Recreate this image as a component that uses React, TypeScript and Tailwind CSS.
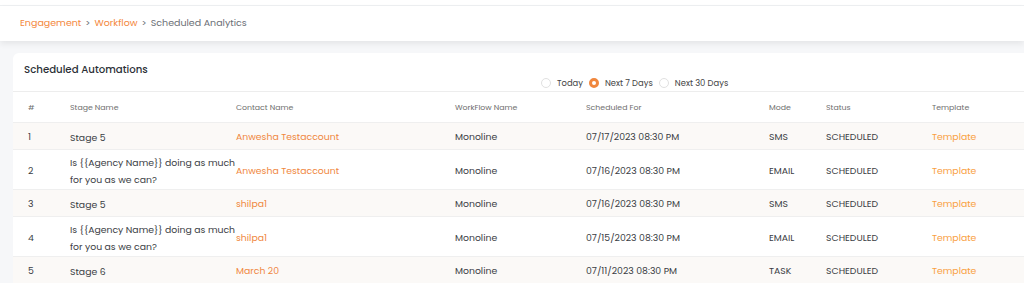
import React from 'react';

type Row = {
  id: number;
  stage: string[];
  contact: string;
  workflow: string;
  scheduledFor: string;
  mode: string;
  status: string;
};

const LONG_STAGE = ['Is {{Agency Name}} doing as much', 'for you as we can?'];

const ROWS: Row[] = [
  { id: 1, stage: ['Stage 5'], contact: 'Anwesha Testaccount', workflow: 'Monoline', scheduledFor: '07/17/2023 08:30 PM', mode: 'SMS', status: 'SCHEDULED' },
  { id: 2, stage: LONG_STAGE, contact: 'Anwesha Testaccount', workflow: 'Monoline', scheduledFor: '07/16/2023 08:30 PM', mode: 'EMAIL', status: 'SCHEDULED' },
  { id: 3, stage: ['Stage 5'], contact: 'shilpa1', workflow: 'Monoline', scheduledFor: '07/16/2023 08:30 PM', mode: 'SMS', status: 'SCHEDULED' },
  { id: 4, stage: LONG_STAGE, contact: 'shilpa1', workflow: 'Monoline', scheduledFor: '07/15/2023 08:30 PM', mode: 'EMAIL', status: 'SCHEDULED' },
  { id: 5, stage: ['Stage 6'], contact: 'March 20', workflow: 'Monoline', scheduledFor: '07/11/2023 08:30 PM', mode: 'TASK', status: 'SCHEDULED' },
];

const COLS = 'grid grid-cols-[42px_166px_219px_131px_183px_57px_106px_1fr] items-center';
const HEADERS = ['#', 'Stage Name', 'Contact Name', 'WorkFlow Name', 'Scheduled For', 'Mode', 'Status', 'Template'];

function Radio({ label, checked }: { label: string; checked?: boolean }) {
  return (
    <label className="flex items-center gap-[6px]">
      {checked ? (
        <span className="h-[10px] w-[10px] rounded-full border-[3px] border-[#f0873e]" />
      ) : (
        <span className="h-[10px] w-[10px] rounded-full border border-[#e1e1e1]" />
      )}
      <span className="text-[8.4px] text-[#444]">{label}</span>
    </label>
  );
}

export default function App() {
  return (
    <div className="h-[283px] w-[1024px] overflow-hidden bg-[#f6f7f9] font-['Poppins','Open_Sans',sans-serif]">
      <div className="h-[5px] bg-white" />
      <div className="h-px bg-[#eef0f2]" />
      <header className="flex h-[35px] items-center bg-white px-5 text-[9.5px] shadow-[0_3px_6px_rgba(0,0,0,0.07)]">
        <span className="text-[#f4873c]">Engagement</span>
        <span className="mx-1 text-[#6b6f76]">&gt;</span>
        <span className="text-[#f4873c]">Workflow</span>
        <span className="mx-1 text-[#6b6f76]">&gt;</span>
        <span className="text-[#6b6f76]">Scheduled Analytics</span>
      </header>

      <main className="pl-[13px] pt-[12px]">
        <div className="w-[1030px] rounded-t-[6px] bg-white">
          <div className="h-[39px] border-b border-[#ededed] px-[11px] pt-[10px]">
            <h2 className="text-[10.2px] font-medium leading-[14px] text-[#2b2f36]">Scheduled Automations</h2>
            <div className="ml-[517px] flex items-center gap-[6px] leading-[12px]">
              <Radio label="Today" />
              <Radio label="Next 7 Days" checked />
              <Radio label="Next 30 Days" />
            </div>
          </div>

          <div className={`${COLS} h-[31px] border-b border-[#efefef] pl-[15px] pt-[2px] text-[7.8px] text-[#6e6e6e]`}>
            {HEADERS.map((h) => (
              <div key={h}>{h}</div>
            ))}
          </div>

          {ROWS.map((r, i) => {
            const tall = r.stage.length > 1;
            return (
              <div
                key={r.id}
                className={`${COLS} border-b border-[#efefef] pl-[15px] pt-[2px] text-[9.3px] text-[#3a3d44] ${
                  i % 2 === 0 ? 'bg-[#fbf9f7]' : 'bg-white'
                } ${tall ? 'h-[40px]' : 'h-[27px]'}`}
              >
                <div>{r.id}</div>
                <div className="leading-[17px]">
                  {r.stage.map((line) => (
                    <div key={line} className="whitespace-nowrap">
                      {line}
                    </div>
                  ))}
                </div>
                <div className="text-[#f0873e]">{r.contact}</div>
                <div>{r.workflow}</div>
                <div>{r.scheduledFor}</div>
                <div>{r.mode}</div>
                <div>{r.status}</div>
                <div className="text-[#f9a03f]">Template</div>
              </div>
            );
          })}
        </div>
      </main>
    </div>
  );
}
